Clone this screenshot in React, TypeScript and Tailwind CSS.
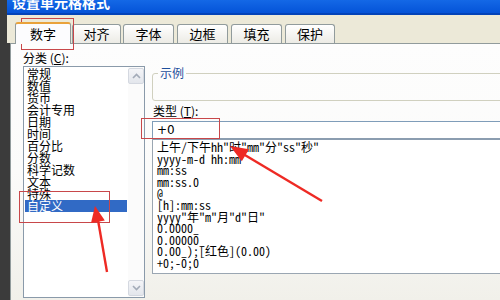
import React from "react";

const cjk = { fontFamily: '"Noto Sans CJK SC", "Noto Sans", sans-serif' };
const mono = { fontFamily: '"Noto Sans Mono CJK SC", "Liberation Mono", "Noto Sans CJK SC", monospace' };

const categories = ["常规", "数值", "货币", "会计专用", "日期", "时间", "百分比", "分数", "科学记数", "文本", "特殊", "自定义"];
const types = [
  '上午/下午hh"时"mm"分"ss"秒"',
  "yyyy-m-d hh:mm",
  "mm:ss",
  "mm:ss.0",
  "@",
  "[h]:mm:ss",
  'yyyy"年"m"月"d"日"',
  "0.0000_",
  "0.00000_",
  "0.00_);[红色](0.00)",
  "+0;-0;0",
];

const tabs = [
  { t: "数字", w: "w-[56px]", ml: "ml-0", sel: true },
  { t: "对齐", w: "w-[49px]", ml: "ml-[1px]", sel: false },
  { t: "字体", w: "w-[51px]", ml: "ml-[2px]", sel: false },
  { t: "边框", w: "w-[51px]", ml: "ml-[3px]", sel: false },
  { t: "填充", w: "w-[51px]", ml: "ml-[3px]", sel: false },
  { t: "保护", w: "w-[50px]", ml: "ml-[3px]", sel: false },
];

function Chevron({ up }: { up: boolean }) {
  return (
    <svg width="9" height="6" viewBox="0 0 9 6">
      <path d={up ? "M1 5 L4.5 1.5 L8 5" : "M1 1 L4.5 4.5 L8 1"} fill="none" stroke="#a3abb8" strokeWidth="1.6" />
    </svg>
  );
}

export default function App() {
  return (
    <div className="relative w-[500px] h-[300px] overflow-hidden flex bg-[#3b3b3b]" style={cjk}>
      <div className="w-[7px] shrink-0 bg-[#3b3b3b]" />
      <div className="flex-1 flex flex-col min-w-0">
        {/* title bar */}
        <div className="h-[15px] shrink-0 overflow-hidden bg-linear-to-b from-[#1468e6] to-[#0553d8] border-b-2 border-[#0343b8] pl-[5px]">
          <div className="text-white font-bold text-[14px] leading-[14px] mt-[-5px] tracking-[0px]">设置单元格格式</div>
        </div>
        {/* tab strip */}
        <div className="h-[28px] shrink-0 bg-[#ece9d8] flex items-end pl-[8px]">
          {tabs.map((tb) =>
            tb.sel ? (
              <div
                key={tb.t}
                className={`${tb.w} ${tb.ml} relative z-10 h-[22px] mb-[-1px] bg-[#fcfcfe] border border-b-0 border-[#919b9c] border-t-2 border-t-[#e9a23b] rounded-t-[3px] flex items-center justify-center text-[13px] text-black`}
              >
                {tb.t}
              </div>
            ) : (
              <div
                key={tb.t}
                className={`${tb.w} ${tb.ml} h-[19px] bg-linear-to-b from-[#ffffff] to-[#ecebe5] border border-b-0 border-[#919b9c] rounded-t-[3px] flex items-center justify-center text-[13px] text-black`}
              >
                {tb.t}
              </div>
            )
          )}
        </div>
        {/* panel */}
        <div className="flex-1 ml-[3px] border-l border-t border-[#919b9c] bg-linear-to-b from-[#fdfdfd] via-[#fbfbfa] to-[#f1f0ea] flex pl-[12px] pt-[6px]">
          {/* left column */}
          <div className="w-[122px] shrink-0 flex flex-col">
            <div className="h-[16px] text-[12px] leading-[16px] text-black">
              分类 (<span className="underline">C</span>):
            </div>
            <div className="h-[232px] border border-[#8a9aaa] bg-white flex">
              <div className="flex-1 pt-[1px] px-[1px]">
                {categories.map((c) => (
                  <div
                    key={c}
                    className={`h-[12px] text-[12px] leading-[12px] pl-[2px] ${c === "自定义" ? "bg-[#316ac5] text-white" : "text-black"}`}
                  >
                    {c}
                  </div>
                ))}
              </div>
              <div className="w-[16px] flex flex-col justify-between py-[1px] bg-[#fbfbfb]">
                <div className="h-[16px] border border-[#d4d8e0] rounded-[2px] bg-linear-to-b from-[#f4f5f8] to-[#e3e6ec] flex items-center justify-center">
                  <Chevron up />
                </div>
                <div className="h-[16px] border border-[#d4d8e0] rounded-[2px] bg-linear-to-b from-[#f4f5f8] to-[#e3e6ec] flex items-center justify-center">
                  <Chevron up={false} />
                </div>
              </div>
            </div>
          </div>
          {/* right column */}
          <div className="w-[360px] shrink-0 ml-[7px] flex flex-col">
            <fieldset className="mt-[16px] h-[35px] border border-[#d0d0bf] rounded-[3px]">
              <legend className="ml-[5px] px-[2px] text-[12px] leading-[14px] text-[#1d4f9c]">示例</legend>
            </fieldset>
            <div className="mt-[2px] ml-[1px] h-[16px] text-[12px] leading-[16px] text-black">
              类型 (<span className="underline">T</span>):
            </div>
            <div
              className="mt-[2px] h-[17px] border-t border-l border-[#7f9db9] bg-white pl-[4px] text-[12px] leading-[16px] text-black"
              style={{ fontFamily: '"DejaVu Sans", sans-serif' }}
            >
              +0
            </div>
            <div className="h-[136px] border-t-2 border-t-[#8b9db0] border-l border-b border-[#9aa6b2] bg-white pl-[4px] pt-[1px]" style={mono}>
              {types.map((t) => (
                <div key={t} className="text-[12px] leading-[11.6px] h-[11.6px] whitespace-nowrap text-black">
                  {t}
                </div>
              ))}
            </div>
          </div>
        </div>
      </div>

      {/* annotations */}
      <div className="absolute left-[21px] top-[18px] w-[53px] h-[32px] border border-[#c8474a] pointer-events-none" />
      <div className="absolute left-[141px] top-[118px] w-[79px] h-[21px] border border-[#c8474a] pointer-events-none" />
      <div className="absolute left-[19px] top-[191px] w-[91px] h-[32px] border border-[#c8474a] pointer-events-none" />
      <svg className="absolute left-0 top-0 pointer-events-none" width="500" height="300" viewBox="0 0 500 300">
        <line x1="107" y1="272" x2="98" y2="220" stroke="#ee2a24" strokeWidth="2.4" />
        <polygon points="95,206 104.8,220.5 91,223" fill="#ee2a24" />
        <line x1="322" y1="201" x2="244" y2="154.5" stroke="#ee2a24" strokeWidth="2.4" />
        <polygon points="230,146 249,149.2 241.8,161.2" fill="#ee2a24" />
      </svg>
    </div>
  );
}
